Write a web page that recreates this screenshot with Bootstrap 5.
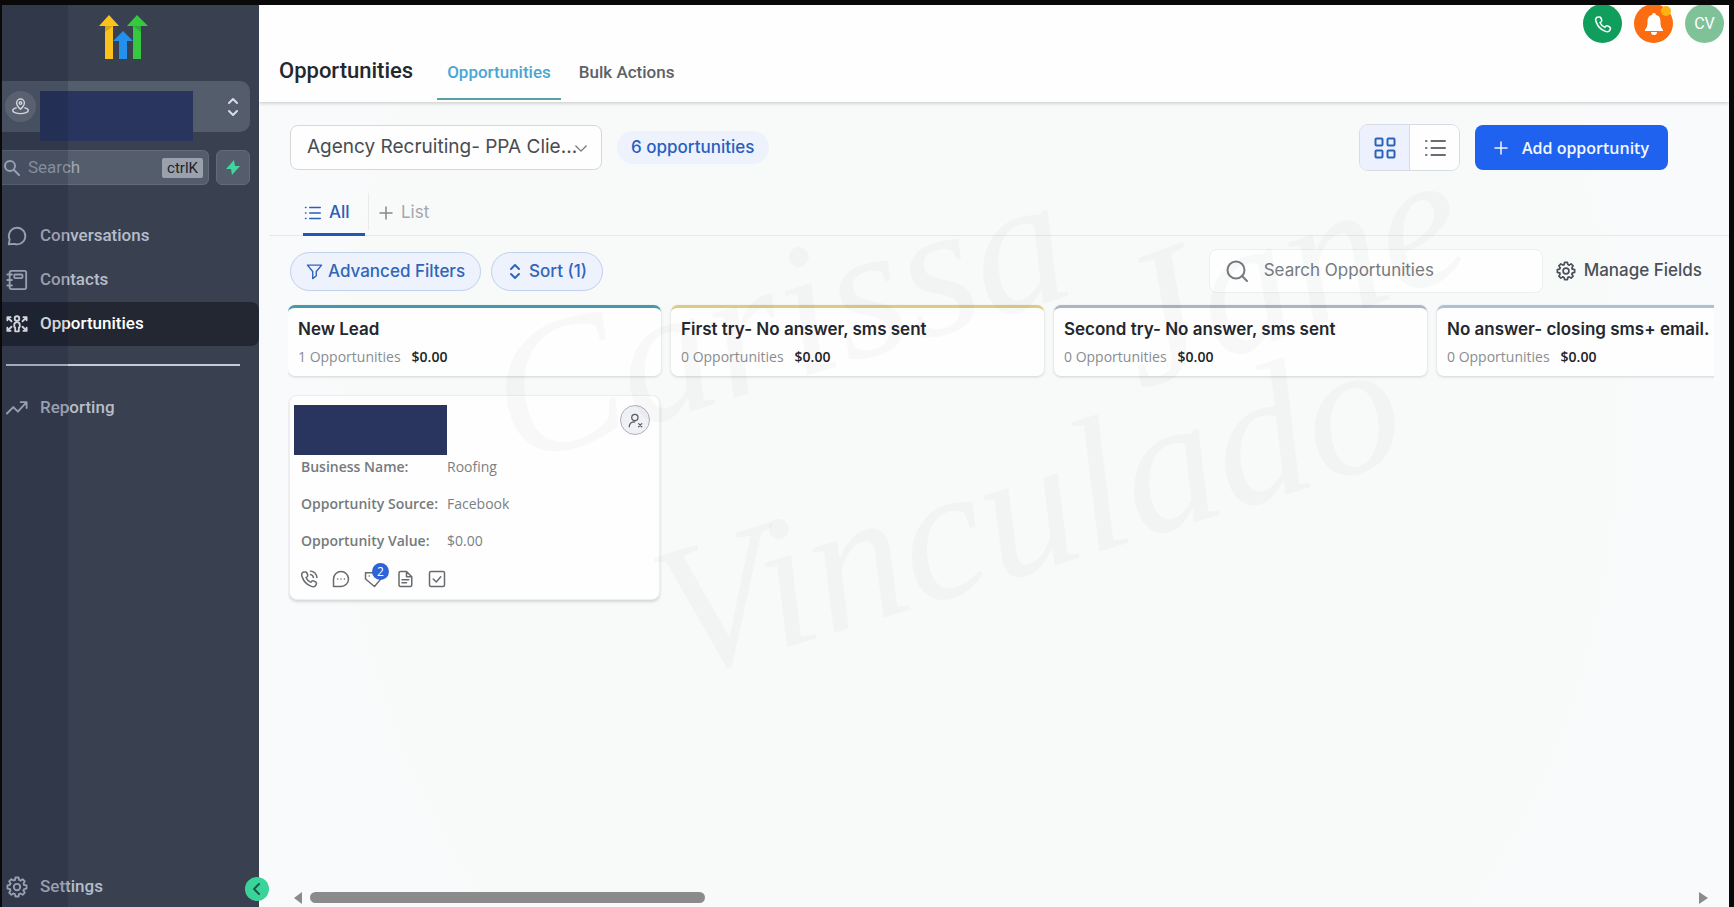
<!DOCTYPE html>
<html lang="en">
<head>
<meta charset="utf-8">
<meta name="viewport" content="width=device-width, initial-scale=1">
<title>Opportunities</title>
<link rel="stylesheet" href="https://cdn.jsdelivr.net/npm/bootstrap@5.3.0/dist/css/bootstrap.min.css">
<style>
  body { background: #090909; font-family: Inter, "Liberation Sans", sans-serif; color: #24272d; }
  svg { display: block; flex-shrink: 0; }
  button, a { text-decoration: none; }
  .rbt { font-family: Roboto, "Liberation Sans", sans-serif; }
  .osans { font-family: "Open Sans", "Noto Sans", sans-serif; }
  .app-frame { padding: 5px 5px 0 2px; }
  .ico { fill: none; stroke: currentColor; stroke-width: 2; stroke-linecap: round; stroke-linejoin: round; }

  /* sidebar */
  .side { width: 257px; flex-shrink: 0; background: #394050; color: #b6bdca; z-index: 3; }
  .side-shade { width: 66px; background: rgba(16, 24, 52, .18); pointer-events: none; z-index: 2; }
  .brand { padding: 10px 0 0 97px; height: 76px; }
  .account { height: 51px; margin-right: 9px; background: #545d6b; border: 0; border-radius: 0 10px 10px 0; color: #d8dde5; padding: 0 10px 0 3px; margin-bottom: 18px; }
  .pin-disc { width: 31px; height: 31px; background: #6a727f; color: #fff; }
  .redact { width: 153px; height: 50px; background: #29355e; flex-shrink: 0; }
  .account .redact { margin-top: 18px; margin-left: 4px; }
  .side-search { height: 35px; min-width: 0; background: #545d6b; border: 1px solid #626b79; border-left: 0; border-radius: 0 6px 6px 0; padding: 0 5px 0 2px; }
  .side-search input { background: none; border: 0; outline: 0; color: #b6bdca; font-size: 17px; width: 0; }
  .side-search input::placeholder { color: #9fa7b4; opacity: 1; }
  .side-search kbd { background: #9aa1ad; color: #20242c; font-size: 15px; line-height: 20px; padding: 0 5px; border-radius: 2px; }
  .bolt { width: 34px; height: 35px; flex-shrink: 0; margin: 0 9px 0 7px; background: #545d6b; border: 1px solid #626b79; border-radius: 6px; color: #3fd79b; }
  .side-nav { padding-top: 5px; }
  .side-link { height: 44px; padding-left: 4px; gap: 12px; color: #b6bdca; font-size: 17px; font-weight: 500; }
  .side-link.active { background: #222732; color: #fff; border-radius: 0 8px 8px 0; }
  .side-link.mt-auto { height: 40px; }
  .side-link svg { width: 22px; }
  .side-rule { height: 2px; background: #c5cbd8; margin: 18px 19px 20px 4px; }
  .collapse-btn { width: 24px; height: 24px; right: -10px; bottom: 6px; background: #3ad49a; border: 0; color: #1c5a4a; z-index: 4; }

  /* header */
  .pane { min-width: 0; background: radial-gradient(ellipse 660px 780px at 49% 46%, #f8faf9 0 96%, #f9fafc 100%); }
  .top { height: 97px; background: #fefefe; box-shadow: 0 1px 4px rgba(0,0,0,.22); z-index: 1; padding-left: 20px; }
  .top h1 { font-size: 22px; font-weight: 500; line-height: 26px; margin: 0 24px 18px 0; }
  .top-tab { height: 52px; padding: 12px 10px 0; margin-bottom: 2px; font-size: 17px; line-height: 24px; font-weight: 500; color: #5d6166; }
  .top-tab.active { color: #4ba6d3; border-bottom: 2px solid #5a9fa8; }
  .top-actions { gap: 12px; margin-right: 5px; top: -1px; right: 0; }
  .disc { width: 39px; height: 39px; border: 0; color: #fff; font-size: 16px; }
  .dot { width: 10px; height: 10px; right: 2px; top: 2px; background: #fdb515; }

  /* controls */
  .toolbar { padding: 22px 61px 0 31px; gap: 15px; }
  .pipeline { width: 312px; height: 45px; border: 1px solid #d5d8da; border-radius: 8px; font-size: 19px; padding: 0 10px 0 16px; color: #484c52; appearance: none; background-color: #fefefe; }
  .chev { right: 15px; top: 20px; color: #777; pointer-events: none; }
  .count { height: 33px; padding: 0 15px 0 14px; background: #edf2fc; color: #285fc0; font-size: 17px; font-weight: 500; }
  .views { height: 47px; width: 101px; border: 1px solid #d8dce2; border-radius: 9px; overflow: hidden; }
  .views button { border: 0; background: #fefefe; color: #6a6d72; }
  .views button.active { background: #edf1fd; color: #2c62ba; border-right: 1px solid #d8dce2; }
  .add { height: 45px; width: 193px; background: #1f62ef; border: 0; border-radius: 8px; color: #f2f6ff; font-size: 16px; font-weight: 600; gap: 14px; }
  .lists { height: 65px; margin-left: 10px; padding-left: 34px; border-bottom: 1px solid #e6e9ec; font-size: 17px; }
  .list-tab { height: 43px; margin-bottom: -1px; background: none; border: 0; gap: 8px; }
  .list-tab.active { width: 62px; color: #285fb8; border-bottom: 3px solid #2457b3; font-weight: 500; padding: 0 1px; }
  .list-add { color: #a3a7ac; border-left: 1px solid #e8ebed; margin: 0 0 5px 3px; height: 37px; padding: 3px 0 0 10px; }
  .filters { padding: 13px 27px 0 31px; gap: 10px; height: 68px; }
  .chip { height: 39px; margin-top: 3px; border: 1px solid #c1d0ec; background: #eef2fc; color: #3065ba; font-size: 17px; font-weight: 500; padding: 0 15px; gap: 5px; }
  .find { width: 334px; height: 44px; border: 1px solid #ecefF0; background: #fdfefd; border-radius: 8px; padding: 0 16px; gap: 16px; color: #777b80; }
  .find input { border: 0; outline: 0; background: none; font-size: 17px; color: #777b80; min-width: 0; }
  .find input::placeholder { color: #777b80; opacity: 1; }
  .manage { height: 44px; border: 0; background: none; color: #4a5058; font-size: 17px; font-weight: 500; gap: 8px; padding: 0; margin-left: 3px; }

  /* board */
  .board { margin-left: 29px; margin-right: 15px; gap: 10px; overflow: hidden; padding-top: 1px; }
  .lane { flex: 0 0 373px; }
  .lane-head { height: 71px; background: #fefefe; border-top: 3px solid; border-radius: 7px; box-shadow: 0 1px 3px rgba(0,0,0,.16); padding: 9px 10px 0; }
  .lane-head h2 { font-size: 17px; line-height: 24px; font-weight: 600; margin: 0; white-space: nowrap; }
  .lane-meta { font-size: 14px; line-height: 20px; margin-top: 6px; color: #898d90; gap: 11px; }
  .lane-meta strong { color: #202226; font-weight: 600; }
  .teal { border-color: #4499ac; } .gold { border-color: #dfca82; } .mauve { border-color: #b0b2c6; } .sky { border-color: #aac1d6; }
  .deal { margin: 19px 1px 4px; height: 205px; background: #fefefe; border: 1px solid #eceeef; border-radius: 8px; box-shadow: 0 2px 3px rgba(0,0,0,.14); padding: 9px 9px 0 4px; }
  .assignee { width: 30px; height: 30px; border: 1px solid #aeb1b9; background: #f0f1f5; color: #555a60; padding: 0; }
  .deal dl { display: grid; grid-template-columns: 146px 1fr; row-gap: 13px; margin: 0 0 0 7px; font-size: 14px; line-height: 24px; color: #7b8083; }
  .deal dt { font-weight: 600; color: #757a7c; white-space: nowrap; }
  .deal dd { margin: 0; }
  .deal-icons { gap: 14px; margin: 17px 0 0 6px; color: #686b6e; }
  .deal-icons button { border: 0; background: none; padding: 0; color: inherit; }
  .tag-count { width: 17px; height: 17px; left: 8px; top: -7px; background: #2f63d8; color: #fff; font-size: 12px; line-height: 17px; }
  .hscroll { height: 19px; padding: 0 21px 0 35px; gap: 8px; color: #8b8b8b; }
  .hscroll .thumb { width: 27%; min-width: 395px; height: 11px; background: #8b8b8b; }
  .signature { inset: 0; pointer-events: none; width: 100%; height: 100%; z-index: 2; overflow: hidden; }
  .signature text { font-family: "Liberation Serif", serif; font-style: italic; fill: #20223a; fill-opacity: .026; }
</style>
</head>
<body>
<div class="app-frame d-flex vh-100 overflow-hidden">
  <aside class="side rbt position-relative d-flex flex-column">
    <div class="side-shade position-absolute top-0 bottom-0 start-0"></div>
    <div class="brand">
      <svg width="49" height="45" viewBox="0 0 49 45"><path fill="#fbc11d" d="M10 0 20 11H14V44H6V11H0Z"/><path fill="#36c940" d="M38 0 49 11H42V44H34V11H28Z"/><path fill="#2490ee" d="M24 16 34 26H28V44H20V26H14Z"/><path d="M6 11h8l-8 6zM34 11h8v6z" opacity=".15"/></svg>
    </div>
    <button class="account d-flex align-items-center" type="button" aria-label="Switch account">
      <span class="pin-disc rounded-circle d-flex align-items-center justify-content-center">
        <svg class="ico" width="17" height="17" viewBox="0 0 24 24"><path d="M12 16c-3-3-5.500-5.500-5.500-9A5.500 5.500 0 0 1 17.500 7c0 3.500-2.500 6-5.500 9Z"/><circle cx="12" cy="7" r="1.800"/><path d="M6 14c-3 .800-5 2-5 3.500C1 20 6 22 12 22s11-2 11-4.500c0-1.500-2-2.700-5-3.500"/></svg>
      </span>
      <span class="redact"></span>
      <svg class="ico ms-auto" width="14" height="20" viewBox="0 0 14 20"><path d="M3 6 7 2l4 4M3 14l4 4 4-4"/></svg>
    </button>
    <div class="d-flex mb-4">
      <label class="side-search d-flex align-items-center gap-2 flex-fill">
        <svg class="ico" width="16" height="16" viewBox="0 0 16 16"><circle cx="6" cy="6" r="5"/><path d="m10 10 5 5"/></svg>
        <input type="search" placeholder="Search" aria-label="Search" class="flex-fill rbt p-0"><kbd class="rbt">ctrlK</kbd>
      </label>
      <button class="bolt d-flex align-items-center justify-content-center p-0" type="button" aria-label="Quick actions"><svg width="14" height="15" viewBox="0 0 14 15"><path fill="currentColor" d="M8 0 0 9h5l1 6 8-9H9Z"/></svg></button>
    </div>
    <nav class="side-nav d-flex flex-column flex-fill">
      <a href="#" class="side-link d-flex align-items-center"><svg class="ico" width="22" height="22" viewBox="0 0 24 24" ><path d="M3 21 4 16A9 9 0 1 1 9 20.500Z"/></svg>Conversations</a>
      <a href="#" class="side-link d-flex align-items-center"><svg class="ico" width="22" height="22" viewBox="0 0 24 24"><rect x="4" y="2" width="18" height="20" rx="2"/><rect x="9" y="6" width="9" height="4" rx="1"/><path d="M1.500 6h5M1.500 12h5M1.500 18h5"/></svg>Contacts</a>
      <a href="#" class="side-link active d-flex align-items-center"><svg class="ico" width="22" height="20" viewBox="0 0 24 20"><circle cx="12" cy="4" r="2.500"/><path d="M9 11c0-2 1-3 3-3s3 1 3 3v2l-1 1v4h-4v-4l-1-1ZM1.500 6V2.500H5M2 3l4 4M22.500 6V2.500H19M22 3l-4 4M1.500 14v3.500H5M2 17l4-4M22.500 14v3.500H19M22 17l-4-4"/></svg>Opportunities</a>
      <div class="side-rule"></div>
      <a href="#" class="side-link d-flex align-items-center"><svg class="ico" width="22" height="20" viewBox="0 0 24 20"><path d="m1 16 7-7 5 5L22 4M16 3.500h6.500V10"/></svg>Reporting</a>
      <a href="#" class="side-link d-flex align-items-center mt-auto"><svg class="ico" width="22" height="22" viewBox="0 0 24 24"><use href="#gear"/></svg>Settings</a>
    </nav>
    <button class="collapse-btn position-absolute rounded-circle d-flex align-items-center justify-content-center p-0" type="button" aria-label="Collapse"><svg class="ico" width="8" height="12" viewBox="0 0 8 12"><path d="M6 1 1 6l5 5"/></svg></button>
  </aside>

  <main class="pane flex-fill d-flex flex-column position-relative overflow-hidden">
    <header class="top rbt d-flex align-items-end position-relative">
      <h1>Opportunities</h1>
      <a href="#" class="top-tab active">Opportunities</a>
      <a href="#" class="top-tab ms-2">Bulk Actions</a>
      <div class="top-actions position-absolute d-flex">
        <button class="disc rounded-circle d-flex align-items-center justify-content-center p-0" style="background:#119d5c" type="button" aria-label="Call"><svg class="ico" width="18" height="18" viewBox="0 0 24 24"><use href="#phone"/></svg></button>
        <button class="disc rounded-circle d-flex align-items-center justify-content-center p-0 position-relative" style="background:#fb6d10" type="button" aria-label="Notifications"><svg width="20" height="22" viewBox="0 0 20 22"><path fill="#fff" d="M10 0a2 2 0 0 0-2 2C4 3 3.500 6 3.500 9 3.500 13 3 14 1 17v1h18v-1c-2-3-2.500-4-2.500-8 0-3-.500-6-4.500-7a2 2 0 0 0-2-2ZM7 19a3 3 0 0 0 6 0Z"/></svg><span class="dot position-absolute rounded-circle"></span></button>
        <button class="disc rounded-circle d-flex align-items-center justify-content-center p-0" style="background:#80c298" type="button">CV</button>
      </div>
    </header>

    <div class="toolbar d-flex align-items-center">
      <div class="position-relative">
        <select class="pipeline" aria-label="Pipeline"><option>Agency Recruiting- PPA Clie...</option></select>
        <svg class="ico chev position-absolute" width="12" height="8" viewBox="0 0 14 9"><path stroke-width="1.500" d="m1 1 6 6 6-6"/></svg>
      </div>
      <span class="count rounded-pill d-flex align-items-center">6 opportunities</span>
      <div class="views d-flex ms-auto">
        <button class="active flex-fill d-flex align-items-center justify-content-center" type="button" aria-label="Board view"><svg class="ico" width="22" height="22" viewBox="0 0 22 22"><rect x="1.500" y="1.500" width="7" height="7" rx="1"/><rect x="13.500" y="1.500" width="7" height="7" rx="1"/><rect x="1.500" y="13.500" width="7" height="7" rx="1"/><rect x="13.500" y="13.500" width="7" height="7" rx="1"/></svg></button>
        <button class="flex-fill d-flex align-items-center justify-content-center" type="button" aria-label="List view"><svg class="ico" width="22" height="18" viewBox="0 0 22 18"><use href="#rows"/></svg></button>
      </div>
      <button class="add osans d-flex align-items-center justify-content-center" type="button"><svg class="ico" width="14" height="14" viewBox="0 0 14 14"><path stroke-width="1.500" d="M7 1v12M1 7h12"/></svg>Add opportunity</button>
    </div>

    <div class="lists d-flex align-items-end">
      <button class="list-tab active d-flex align-items-center" type="button"><svg class="ico" width="17" height="14" viewBox="0 0 22 18"><use href="#rows"/></svg>All</button>
      <button class="list-tab list-add d-flex align-items-center" type="button"><svg class="ico" width="14" height="14" viewBox="0 0 14 14" style="color:#85898d"><path stroke-width="1.500" d="M7 1v12M1 7h12"/></svg>List</button>
    </div>

    <div class="filters d-flex align-items-start">
      <button class="chip rounded-pill d-flex align-items-center" type="button"><svg class="ico" width="17" height="17" viewBox="0 0 24 24"><path d="M2 3h20l-7.500 9v6L9.500 22V12Z"/></svg>Advanced Filters</button>
      <button class="chip rounded-pill d-flex align-items-center" type="button"><svg class="ico" width="17" height="17" viewBox="0 0 17 17"><path d="m4 6 4-4 4 4M4 11l4 4 4-4"/></svg>Sort (1)</button>
      <label class="find d-flex align-items-center ms-auto"><svg class="ico" width="22" height="22" viewBox="0 0 22 22"><circle cx="10" cy="10" r="8.500"/><path d="m16 16 5 5"/></svg><input type="search" class="flex-fill p-0" placeholder="Search Opportunities" aria-label="Search Opportunities"></label>
      <button class="manage d-flex align-items-center" type="button"><svg class="ico" width="20" height="20" viewBox="0 0 24 24"><use href="#gear"/></svg>Manage Fields</button>
    </div>

    <div class="board d-flex flex-fill">
      <section class="lane">
        <div class="lane-head teal"><h2>New Lead</h2><div class="lane-meta osans d-flex"><span>1 Opportunities</span><strong>$0.00</strong></div></div>
        <article class="deal osans">
          <div class="d-flex justify-content-between align-items-start">
            <span class="redact"></span>
            <button class="assignee rounded-circle d-flex align-items-center justify-content-center" type="button" aria-label="Unassigned"><svg class="ico" width="15" height="15" viewBox="0 0 24 24"><circle cx="11" cy="7" r="5"/><path d="M2 22c0-5 3-8 9-8M17 17l5 5M22 17l-5 5"/></svg></button>
          </div>
          <dl><dt>Business Name:</dt><dd>Roofing</dd><dt>Opportunity Source:</dt><dd>Facebook</dd><dt>Opportunity Value:</dt><dd>$0.00</dd></dl>
          <div class="deal-icons d-flex">
            <button type="button" aria-label="Call"><svg class="ico" width="18" height="18" viewBox="0 0 24 24"><use href="#phone"/><path d="M14 6a5 5 0 0 1 4 4M14 1.500a9 9 0 0 1 8.500 8.500"/></svg></button>
            <button type="button" aria-label="Message"><svg class="ico" width="18" height="18" viewBox="0 0 24 24"><path d="M2 22V12A10 10 0 1 1 12 22ZM7.500 12h.1M12 12h.1M16.500 12h.1"/></svg></button>
            <button type="button" aria-label="Tags" class="position-relative"><svg class="ico" width="18" height="18" viewBox="0 0 24 24"><path d="M2 3.500h11l9 9-8 9.500L2 12ZM7 8h.1"/></svg><span class="tag-count position-absolute rounded-circle text-center">2</span></button>
            <button type="button" aria-label="Notes"><svg class="ico" width="18" height="18" viewBox="0 0 24 24"><path d="M14 2H6a2 2 0 0 0-2 2v16a2 2 0 0 0 2 2h13a2 2 0 0 0 2-2V9ZM14 2v7h7M8 13h9M8 17h6"/></svg></button>
            <button type="button" aria-label="Tasks"><svg class="ico" width="18" height="18" viewBox="0 0 24 24"><rect x="2" y="2" width="20" height="20" rx="2"/><path d="m7 12 4 4 6-7"/></svg></button>
          </div>
        </article>
      </section>
      <section class="lane"><div class="lane-head gold"><h2>First try- No answer, sms sent</h2><div class="lane-meta osans d-flex"><span>0 Opportunities</span><strong>$0.00</strong></div></div></section>
      <section class="lane"><div class="lane-head mauve"><h2>Second try- No answer, sms sent</h2><div class="lane-meta osans d-flex"><span>0 Opportunities</span><strong>$0.00</strong></div></div></section>
      <section class="lane"><div class="lane-head sky"><h2>No answer- closing sms+ email.</h2><div class="lane-meta osans d-flex"><span>0 Opportunities</span><strong>$0.00</strong></div></div></section>
    </div>
    <div class="hscroll d-flex align-items-center">
      <svg width="8" height="12" viewBox="0 0 8 12"><path fill="currentColor" d="M8 0v12L0 6Z"/></svg>
      <span class="thumb rounded-pill"></span>
      <svg class="ms-auto" width="9" height="12" viewBox="0 0 9 12"><path fill="currentColor" d="M0 0v12l9-6Z"/></svg>
    </div>

    <svg class="signature position-absolute" viewBox="0 0 1469 902" preserveAspectRatio="xMidYMid meet" aria-hidden="true">
      <text font-size="190" transform="translate(255 460) rotate(-17)">Carissa</text>
      <text font-size="190" transform="translate(880 385) rotate(-20)">Jane</text>
      <text font-size="190" transform="translate(420 675) rotate(-17)">Vinculado</text>
    </svg>
  </main>
</div>

<svg width="0" height="0" class="position-absolute" aria-hidden="true">
  <defs>
    <path id="tooth" d="M9.700 4.300 10.300 1.600H13.700L14.300 4.300 15.800 4.900"/>
    <g id="gear"><circle cx="12" cy="12" r="3.500"/><use href="#tooth"/><use href="#tooth" transform="rotate(45 12 12)"/><use href="#tooth" transform="rotate(90 12 12)"/><use href="#tooth" transform="rotate(135 12 12)"/><use href="#tooth" transform="rotate(180 12 12)"/><use href="#tooth" transform="rotate(225 12 12)"/><use href="#tooth" transform="rotate(270 12 12)"/><use href="#tooth" transform="rotate(315 12 12)"/></g>
    <path id="phone" d="M7.500 2.500 4 3C2 4 2 7 3 9.500 5 15 9 19.500 14.500 21.500c2.500 1 5.500 1 6.500-1l1-2.500c0-1-.5-1.500-1-2l-3-1.500c-1-.5-2 0-2.500.7l-1 1.300C12 15.500 9 12.500 8 10l1.500-1c.8-.7 1-1.500.7-2.500L9 3.500c-.3-.7-.8-1-1.500-1Z"/>
    <path id="rows" d="M2 2h.5M2 9h.5M2 16h.5M7.500 2H21M7.500 9H21M7.500 16H21"/>
  </defs>
</svg>
<script src="https://cdn.jsdelivr.net/npm/bootstrap@5.3.0/dist/js/bootstrap.bundle.min.js"></script>
</body>
</html>
